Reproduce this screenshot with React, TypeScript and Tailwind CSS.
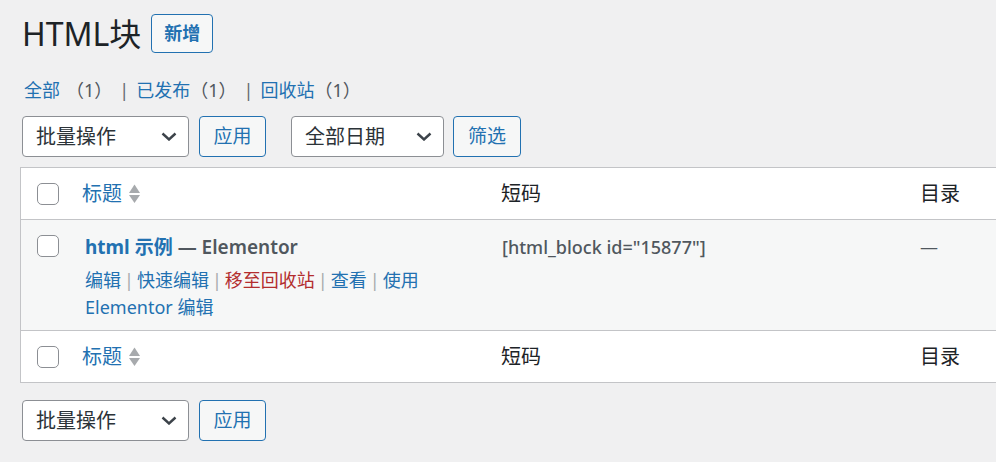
import React from "react"

const font = "font-['Noto_Sans','Noto_Sans_CJK_SC',sans-serif]"

const Chevron: React.FC = () => (
  <svg width="16" height="9" viewBox="0 0 16 9" aria-hidden="true">
    <path d="M1.5 1.5 L8 7.5 L14.5 1.5" fill="none" stroke="#3c434a" strokeWidth="2.4" />
  </svg>
)

const SortIcon: React.FC = () => (
  <svg width="13" height="22" viewBox="0 0 13 22" className="ml-[6px]" aria-hidden="true">
    <path d="M6.5 1.5 L12 10 L1 10 Z" fill="#a7aaad" />
    <path d="M1 12 L12 12 L6.5 20 Z" fill="#a7aaad" />
  </svg>
)

const Checkbox: React.FC = () => (
  <span className="block w-[22px] h-[22px] rounded-[5px] border border-[#8c8f94] bg-white" />
)

const Select: React.FC<{ label: string; width: string }> = ({ label, width }) => (
  <div
    className={`${width} h-[41px] flex items-center justify-between pl-[13px] pr-[11px] bg-white border border-[#8c8f94] rounded-[4px] text-[20px] text-[#2c3338]`}
  >
    <span>{label}</span>
    <Chevron />
  </div>
)

const Button: React.FC<{ label: string; width: string }> = ({ label, width }) => (
  <button
    className={`${width} h-[41px] flex items-center justify-center bg-[#f6f7f7] border border-[#2271b1] rounded-[4px] text-[19px] text-[#2271b1]`}
  >
    {label}
  </button>
)

const HeaderRow: React.FC<{ top?: boolean }> = ({ top }) => (
  <div className={`flex h-[52px] items-center bg-white ${top ? 'border-b' : 'border-t'} border-[#c3c4c7]`}>
    <div className="w-[50px] pl-[16px]">
      <Checkbox />
    </div>
    <div className="w-[417px] pl-[11px] flex items-center text-[20px] text-[#2271b1]">
      标题
      <SortIcon />
    </div>
    <div className="w-[419px] pl-[13px] text-[20px] text-[#1d2327]">短码</div>
    <div className="flex-1 pl-[13px] text-[20px] text-[#1d2327]">目录</div>
  </div>
)

const Sep: React.FC = () => <span className="text-[#a7aaad] mx-[3px]">|</span>

export default function App() {
  return (
    <div className={`min-h-screen bg-[#f0f0f1] pl-[20px] pt-[14px] pb-[20px] ${font}`}>
      <div className="flex items-center gap-[10px] pl-[2px]">
        <h1 className="text-[32px] leading-[39px] text-[#1d2327]">HTML块</h1>
        <button className="h-[39px] px-[12px] bg-[#f6f7f7] border border-[#2271b1] rounded-[4px] text-[18px] font-semibold text-[#2271b1]">
          新增
        </button>
      </div>

      <div className="mt-[25px] pl-[4px] h-[25px] flex items-center text-[18px] text-[#2271b1]">
        <span>全部</span>
        <span className="text-[#50575e] ml-[6px]">（1）</span>
        <span className="text-[#646970] mx-[7px]">|</span>
        <span>已发布</span>
        <span className="text-[#50575e]">（1）</span>
        <span className="text-[#646970] mx-[7px]">|</span>
        <span>回收站</span>
        <span className="text-[#50575e]">（1）</span>
      </div>

      <div className="mt-[13px] ml-[2px] flex items-center">
        <Select label="批量操作" width="w-[167px]" />
        <div className="ml-[10px]">
          <Button label="应用" width="w-[67px]" />
        </div>
        <div className="ml-[25px]">
          <Select label="全部日期" width="w-[153px]" />
        </div>
        <div className="ml-[9px]">
          <Button label="筛选" width="w-[68px]" />
        </div>
      </div>

      <div className="mt-[10px] border-t border-l border-b border-[#c3c4c7] bg-white">
        <HeaderRow top />
        <div className="flex h-[110px] bg-[#f6f7f7]">
          <div className="w-[50px] pl-[16px] pt-[15px]">
            <Checkbox />
          </div>
          <div className="w-[417px] pl-[14px] pt-[14px]">
            <div className="h-[26px] leading-[26px] text-[19px] font-semibold text-[#50575e]">
              <span className="text-[#2271b1] font-bold">html 示例</span> — Elementor
            </div>
            <div className="mt-[7px] text-[18px] leading-[27px] text-[#2271b1]">
              <div>
                编辑<Sep />快速编辑<Sep />
                <span className="text-[#b32d2e]">移至回收站</span>
                <Sep />查看<Sep />使用
              </div>
              <div>Elementor 编辑</div>
            </div>
          </div>
          <div className="w-[419px] pl-[14px] pt-[14px] text-[18px] leading-[26px] font-medium text-[#50575e]">
            [html_block id="15877"]
          </div>
          <div className="flex-1 pl-[13px] pt-[14px] text-[18px] leading-[26px] text-[#50575e]">—</div>
        </div>
        <HeaderRow />
      </div>

      <div className="mt-[17px] ml-[2px] flex items-center">
        <Select label="批量操作" width="w-[167px]" />
        <div className="ml-[10px]">
          <Button label="应用" width="w-[67px]" />
        </div>
      </div>
    </div>
  )
}
